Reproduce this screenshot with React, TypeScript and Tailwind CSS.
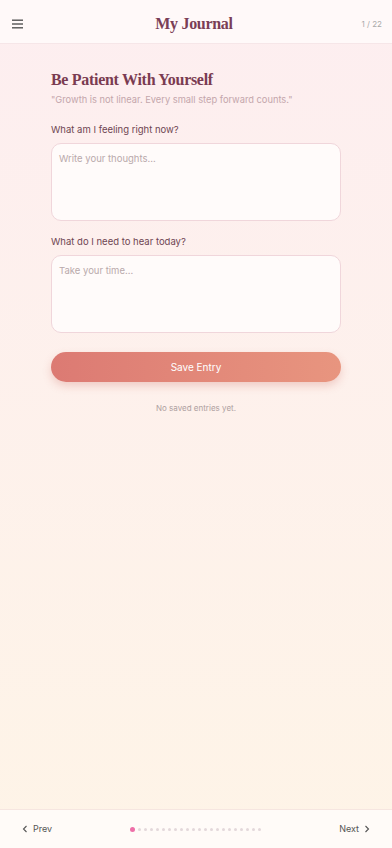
import React from "react";

const serif = { fontFamily: '"Liberation Serif", "DejaVu Serif", serif' };

export default function App() {
  const dots = Array.from({ length: 22 }, (_, i) => i);
  return (
    <div
      className="w-[392px] h-[848px] flex flex-col bg-gradient-to-b from-[#fdeef0] to-[#fef4e7] overflow-hidden"
      style={{ fontFamily: '"Inter", "Noto Sans", sans-serif' }}
    >
      <header className="h-[44px] shrink-0 flex items-center justify-between pl-[12px] pr-[10px] pt-[5px] bg-[#fffafa]/90 border-b border-[#f6e6e8]">
        <svg width="12" height="10" viewBox="0 0 12 10" className="text-[#555]">
          <rect x="0" y="0.5" width="11" height="1.4" fill="currentColor" />
          <rect x="0" y="4.3" width="11" height="1.4" fill="currentColor" />
          <rect x="0" y="8.1" width="11" height="1.4" fill="currentColor" />
        </svg>
        <div
          className="text-[16px] font-bold text-[#7a3e56] tracking-[-0.3px] ml-[16px]"
          style={serif}
        >
          My Journal
        </div>
        <div className="text-[8px] text-[#aaa] w-[34px] text-right">1 / 22</div>
      </header>

      <main className="flex-1 px-[51px] pt-[25px]">
        <h1 className="text-[16px] font-bold text-[#7a3b51] tracking-[-0.3px] leading-[22px]" style={serif}>
          Be Patient With Yourself
        </h1>
        <p className="text-[9.3px] text-[#c4a6ac] mt-[2px] leading-[14px]">
          "Growth is not linear. Every small step forward counts."
        </p>

        <label className="block text-[9.5px] text-[#6e4552] mt-[16px] leading-[14px]">
          What am I feeling right now?
        </label>
        <div className="mt-[6px] h-[78px] rounded-[10px] border border-[#f0d6db] bg-[#fffbfa] px-[7px] pt-[8px] text-[9.5px] text-[#b9a9ab]">
          Write your thoughts...
        </div>

        <label className="block text-[9.5px] text-[#6e4552] mt-[14px] leading-[14px]">
          What do I need to hear today?
        </label>
        <div className="mt-[6px] h-[78px] rounded-[10px] border border-[#f0d6db] bg-[#fffbfa] px-[7px] pt-[8px] text-[9.5px] text-[#b9a9ab]">
          Take your time...
        </div>

        <button className="mt-[19px] w-full h-[30px] rounded-full bg-gradient-to-r from-[#dc7a73] to-[#e8957f] text-white text-[10px] shadow-[0_4px_8px_rgba(210,120,110,0.3)]">
          Save Entry
        </button>

        <p className="text-center text-[8px] text-[#aea0a0] mt-[20px]">No saved entries yet.</p>
      </main>

      <footer className="h-[39px] shrink-0 flex items-center justify-between px-[22px] bg-[#fffbf8] border-t border-[#f6e6e0]">
        <div className="flex items-center gap-[5px] text-[9px] text-[#555]">
          <svg width="6" height="8" viewBox="0 0 6 8">
            <path d="M4.5 1 L1.5 4 L4.5 7" fill="none" stroke="#555" strokeWidth="1.1" />
          </svg>
          Prev
        </div>
        <div className="flex items-center gap-[3px]">
          {dots.map((i) =>
            i === 0 ? (
              <span key={i} className="w-[5px] h-[5px] rounded-full bg-[#ee6fa8]" />
            ) : (
              <span key={i} className="w-[3px] h-[3px] rounded-full bg-[#e3d8da]" />
            )
          )}
        </div>
        <div className="flex items-center gap-[5px] text-[9px] text-[#555]">
          Next
          <svg width="6" height="8" viewBox="0 0 6 8">
            <path d="M1.5 1 L4.5 4 L1.5 7" fill="none" stroke="#555" strokeWidth="1.1" />
          </svg>
        </div>
      </footer>
    </div>
  );
}
